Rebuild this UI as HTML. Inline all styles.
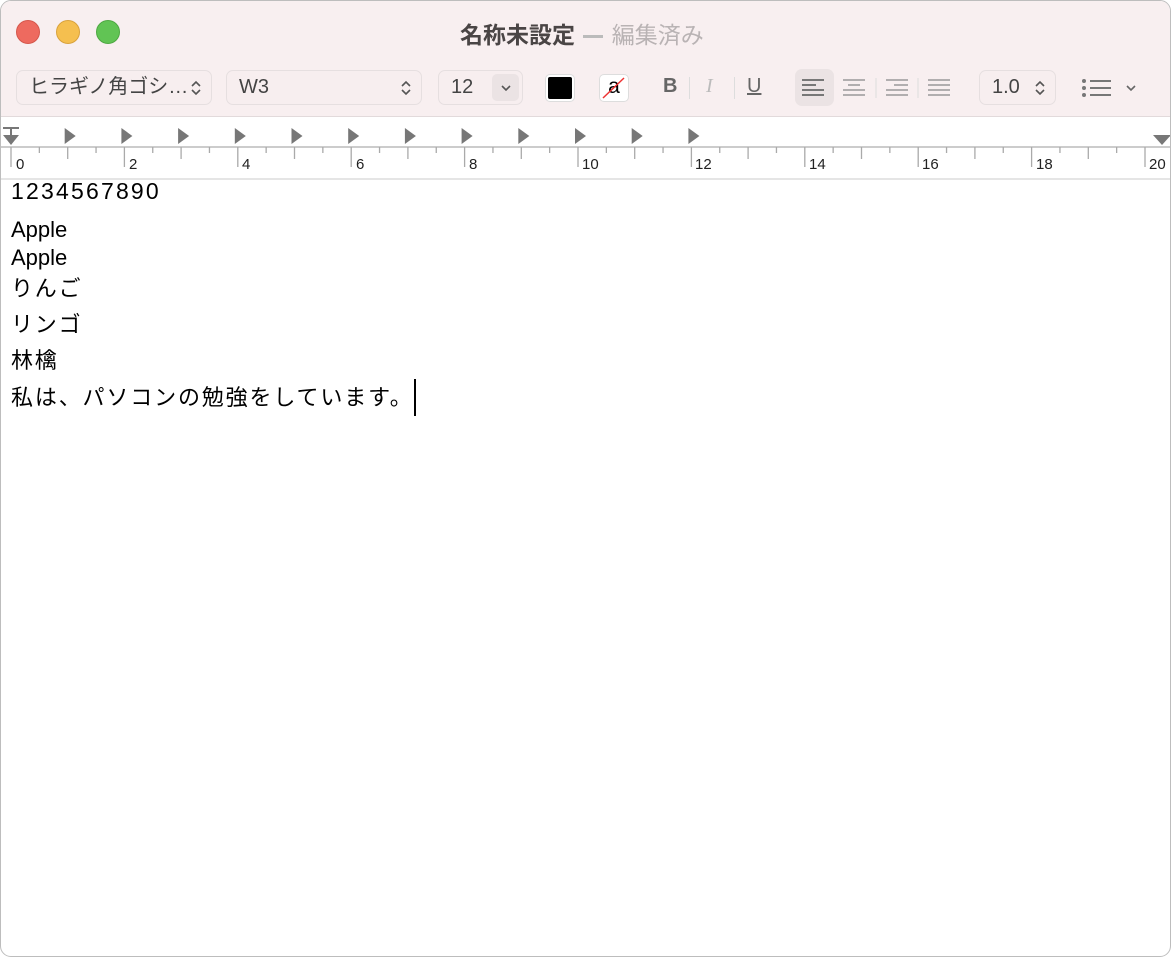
<!DOCTYPE html>
<html><head><meta charset="utf-8"><style>
*{margin:0;padding:0;box-sizing:border-box}
body{width:1171px;height:957px;background:#fff;font-family:"Liberation Sans","Noto Sans CJK JP",sans-serif;position:relative;overflow:hidden}
.win{position:absolute;left:0;top:0;width:1171px;height:957px;border:1px solid #bdbdbd;border-radius:11px;overflow:hidden;background:#fff}
.hdr{position:absolute;left:0;top:0;width:100%;height:116px;background:#f8eff0;border-bottom:1px solid #e2dadb}
.a{position:absolute}
.dot{position:absolute;top:19px;width:24px;height:24px;border-radius:50%}
.box{position:absolute;top:69px;height:35px;border:1px solid #e6dfe0;border-radius:7px;background:#f7eeef;font-size:20px;color:#444;line-height:33px;padding-left:12px}
.chev{position:absolute;right:10px;top:9px}
.t{position:absolute;left:10px;font-size:22px;color:#000;white-space:nowrap}
.lab{position:absolute;top:155px;font-size:15px;color:#222}
</style></head><body><div class="win">
<div class="hdr"></div>
<div class="dot" style="left:15px;background:#ee6a5f;border:1px solid #d5574c"></div>
<div class="dot" style="left:55px;background:#f5bf4f;border:1px solid #d9a23c"></div>
<div class="dot" style="left:95px;background:#61c454;border:1px solid #4ea842"></div>
<div class="a" style="left:459px;top:15px;font-size:23px;font-weight:bold;color:#4a4545;white-space:nowrap">名称未設定 <span style="display:inline-block;width:20px;height:3px;background:#bbb;vertical-align:middle;margin:0 2px"></span> <span style="color:#b9b3b4;font-weight:normal">編集済み</span></div>

<div class="box" style="left:15px;width:196px">ヒラギノ角ゴシ…<svg class="chev" width="10" height="16"><path d="M1 6 L5 2 L9 6 M1 10 L5 14 L9 10" fill="none" stroke="#555" stroke-width="1.6"/></svg></div>
<div class="box" style="left:225px;width:196px">W3<svg class="chev" width="10" height="16"><path d="M1 6 L5 2 L9 6 M1 10 L5 14 L9 10" fill="none" stroke="#555" stroke-width="1.6"/></svg></div>
<div class="box" style="left:437px;width:85px">12<div class="a" style="right:3px;top:3px;width:27px;height:27px;background:#ebe3e4;border-radius:5px"><svg class="a" style="left:9px;top:11px" width="10" height="6"><path d="M1 1 L5 5 L9 1" fill="none" stroke="#555" stroke-width="1.6"/></svg></div></div>
<div class="a" style="left:545px;top:74px;width:28px;height:26px;background:#000;border:2px solid #fff;border-radius:4px;box-shadow:0 0 0 1px #ddd"></div>
<div class="a" style="left:599px;top:74px;width:28px;height:26px;background:#fff;border-radius:4px;box-shadow:0 0 0 1px #ddd;font-size:21px;line-height:24px;text-align:center">a<svg class="a" style="left:0;top:0" width="28" height="26"><line x1="3" y1="23" x2="24" y2="3" stroke="#e33" stroke-width="1.5"/></svg></div>
<div class="a" style="left:662px;top:74px;font-size:20px;font-weight:bold;color:#666">B</div>
<div class="a" style="left:688px;top:76px;width:1px;height:22px;background:#ddd"></div>
<div class="a" style="left:705px;top:74px;font-size:20px;font-style:italic;color:#bbb;font-family:'Liberation Serif',serif">I</div>
<div class="a" style="left:733px;top:76px;width:1px;height:22px;background:#ddd"></div>
<div class="a" style="left:746px;top:74px;font-size:20px;color:#666;text-decoration:underline">U</div>
<div class="a" style="left:794px;top:68px;width:39px;height:37px;background:#ebe3e4;border-radius:7px"></div>
<svg class="a" style="left:800px;top:77px" width="160" height="20">
<g stroke="#777" stroke-width="2"><line x1="1" y1="2" x2="23" y2="2"/><line x1="1" y1="7" x2="15" y2="7"/><line x1="1" y1="12" x2="23" y2="12"/><line x1="1" y1="17" x2="23" y2="17"/></g>
<g stroke="#999" stroke-width="1.6"><line x1="42" y1="2" x2="64" y2="2"/><line x1="47" y1="7" x2="59" y2="7"/><line x1="42" y1="12" x2="64" y2="12"/><line x1="42" y1="17" x2="64" y2="17"/>
<line x1="85" y1="2" x2="107" y2="2"/><line x1="93" y1="7" x2="107" y2="7"/><line x1="85" y1="12" x2="107" y2="12"/><line x1="85" y1="17" x2="107" y2="17"/>
<line x1="127" y1="2" x2="149" y2="2"/><line x1="127" y1="7" x2="149" y2="7"/><line x1="127" y1="12" x2="149" y2="12"/><line x1="127" y1="17" x2="149" y2="17"/></g>
<line x1="75" y1="0" x2="75" y2="20" stroke="#ddd"/><line x1="117" y1="0" x2="117" y2="20" stroke="#ddd"/></svg>
<div class="box" style="left:978px;width:77px">1.0<svg class="chev" width="10" height="16"><path d="M1 6 L5 2 L9 6 M1 10 L5 14 L9 10" fill="none" stroke="#555" stroke-width="1.6"/></svg></div>
<svg class="a" style="left:1080px;top:77px" width="60" height="20"><g fill="#777"><circle cx="3" cy="3" r="2"/><circle cx="3" cy="10" r="2"/><circle cx="3" cy="17" r="2"/></g><g stroke="#777" stroke-width="2"><line x1="9" y1="3" x2="30" y2="3"/><line x1="9" y1="10" x2="30" y2="10"/><line x1="9" y1="17" x2="30" y2="17"/></g><path d="M46 8 L50 12 L54 8" fill="none" stroke="#666" stroke-width="1.6"/></svg>

<svg class="a" style="left:0;top:116px" width="1171" height="62" id="r"></svg>
<div class="a" style="left:0;top:177px;width:100%;height:2px;background:#e5e5e5"></div>
<div class="lab" style="left:15px">0</div><div class="lab" style="left:128px">2</div><div class="lab" style="left:241px">4</div><div class="lab" style="left:355px">6</div><div class="lab" style="left:468px">8</div><div class="lab" style="left:581px">10</div><div class="lab" style="left:694px">12</div><div class="lab" style="left:808px">14</div><div class="lab" style="left:921px">16</div><div class="lab" style="left:1035px">18</div><div class="lab" style="left:1148px">20</div>

<div class="t" style="top:177px;font-size:23px;letter-spacing:2.2px">1234567890</div>
<div class="t" style="top:216px">Apple</div>
<div class="t" style="top:244px">Apple</div>
<div class="t" style="top:270px;letter-spacing:1.8px">りんご</div>
<div class="t" style="top:306px;letter-spacing:1.8px">リンゴ</div>
<div class="t" style="top:342px;letter-spacing:1.8px">林檎</div>
<div class="t" style="top:379px;letter-spacing:1.85px">私は、パソコンの勉強をしています。</div>
<div class="a" style="left:413px;top:378px;width:2px;height:37px;background:#000"></div>
</div>
<script>
var s='<line x1="0" y1="30" x2="1171" y2="30" stroke="#bbb" stroke-width="1.5"/>';
for(var i=0;i<=41;i++){var x=10+i*28.35;var cm=i%2==0;var maj=i%4==0;
s+='<line x1="'+x+'" y1="30" x2="'+x+'" y2="'+(maj?50:cm?42:36)+'" stroke="#aaa" stroke-width="1.3"/>';}
for(var k=1;k<=12;k++){var x=10+k*56.7-3;s+='<path d="M'+x+' 11 L'+(x+11)+' 19 L'+x+' 27Z" fill="#777"/>';}
s+='<path d="M2 18 L18 18 L10 28Z" fill="#777"/><rect x="2" y="10" width="16" height="2" fill="#777"/><line x1="10" y1="10" x2="10" y2="20" stroke="#777" stroke-width="2"/>';
s+='<path d="M1152 18 L1170 18 L1161 28Z" fill="#777"/>';
document.getElementById('r').innerHTML=s;
</script>
</body></html>
